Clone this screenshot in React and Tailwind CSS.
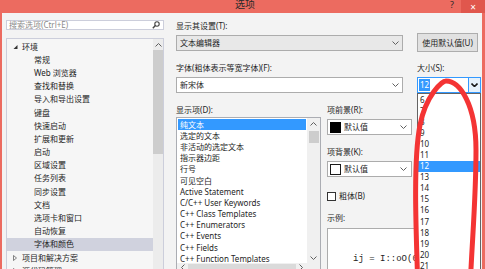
import React from "react";

const treeItems = [
  { label: "环境", top: true, open: true },
  { label: "常规" },
  { label: "Web 浏览器" },
  { label: "查找和替换" },
  { label: "导入和导出设置" },
  { label: "键盘" },
  { label: "快速启动" },
  { label: "扩展和更新" },
  { label: "启动" },
  { label: "区域设置" },
  { label: "任务列表" },
  { label: "同步设置" },
  { label: "文档" },
  { label: "选项卡和窗口" },
  { label: "自动恢复" },
  { label: "字体和颜色", selected: true },
  { label: "项目和解决方案", top: true },
  { label: "源代码管理", top: true },
];

const displayItems = [
  "纯文本",
  "选定的文本",
  "非活动的选定文本",
  "指示器边距",
  "行号",
  "可见空白",
  "Active Statement",
  "C/C++ User Keywords",
  "C++ Class Templates",
  "C++ Enumerators",
  "C++ Events",
  "C++ Fields",
  "C++ Function Templates",
  "C++ Functions",
];

const sizes = [6, 7, 8, 9, 10, 11, 12, 13, 14, 15, 16, 17, 18, 19, 20, 21, 22, 24];

const Chevron = ({ down = true, bold = false }) => (
  <svg width="7" height="4" viewBox="0 0 7 4" className="shrink-0">
    <path
      d={down ? "M0.5 0.5 L3.5 3.5 L6.5 0.5" : "M0.5 3.5 L3.5 0.5 L6.5 3.5"}
      fill="none"
      stroke={bold ? "#1a1a1a" : "#606060"}
      strokeWidth={bold ? 1.6 : 1}
    />
  </svg>
);

const Label = ({ children }) => (
  <div className="h-[10px] leading-[10px] whitespace-nowrap">{children}</div>
);

const ColorCombo = ({ filled }) => (
  <div className="mt-[4px] h-[16px] w-[85px] border border-[#acacac] bg-white flex items-center pl-[2px] pr-[4px]">
    <div
      className={
        filled
          ? "w-[11px] h-[11px] bg-black"
          : "w-[11px] h-[11px] border border-[#1a1a1a] bg-white"
      }
    />
    <span className="ml-[3px] flex-1">默认值</span>
    <Chevron />
  </div>
);

export default function App() {
  return (
    <div className="relative w-[485px] h-[269px] overflow-hidden bg-[#ec6b60] font-['Noto_Sans','Noto_Sans_CJK_SC',sans-serif] text-[8px] text-[#1e1e1e] leading-none">
      {/* title bar */}
      <div className="flex h-[13px] items-start">
        <div className="flex-1" />
        <div className="ml-[5px] text-[10px] leading-[9px] text-[#2a2a2a]">选项</div>
        <div className="flex-1 flex justify-end items-start">
          <span className="w-[10px] text-center text-[9px] leading-[9px] text-[#2a2a2a]">?</span>
          <div className="ml-[4px] w-[24px] h-[13px] bg-[#e0574d] flex items-center justify-center text-white text-[10px]">
            ×
          </div>
        </div>
      </div>

      {/* body */}
      <div className="flex h-[262px] ml-[2px] mr-[3px] bg-[#f3f3f3]">
        {/* left: search + tree */}
        <div className="w-[162px] pl-[4px] pt-[7px] flex flex-col">
          <div className="h-[13px] border border-[#cccedb] bg-white flex items-center pl-[2px] pr-[3px]">
            <span className="flex-1 text-[#8a8a8a] whitespace-nowrap">搜索选项(Ctrl+E)</span>
            <svg width="8" height="8" viewBox="0 0 8 8">
              <circle cx="5" cy="3" r="2.2" fill="none" stroke="#444" strokeWidth="1.1" />
              <path d="M3.4 4.6 L0.8 7.2" stroke="#444" strokeWidth="1.4" />
            </svg>
          </div>
          <div className="mt-[8px] flex-1 border border-[#cccedb] bg-[#f6f6f6] flex">
            <div className="flex-1 pt-[1px]">
              {treeItems.map((item) => (
                <div
                  key={item.label}
                  className={
                    "h-[13.2px] flex items-center whitespace-nowrap " +
                    (item.selected ? "bg-[#d0d2de] " : "") +
                    (item.top ? "pl-[6px]" : "pl-[27px]")
                  }
                >
                  {item.top && (
                    <svg width="9" height="6" viewBox="0 0 9 6" className="shrink-0">
                      {item.open ? (
                        <path d="M4.5 1 L4.5 5 L0.5 5 Z" fill="#333" />
                      ) : (
                        <path d="M0.5 0.5 L3.5 3 L0.5 5.5 Z" fill="none" stroke="#666" strokeWidth="0.8" />
                      )}
                    </svg>
                  )}
                  <span>{item.label}</span>
                </div>
              ))}
            </div>
            <div className="w-[10px] bg-[#ececec] flex flex-col items-center">
              <div className="h-[11px] flex items-center">
                <Chevron down={false} />
              </div>
              <div className="w-[10px] h-[104px] bg-[#cdcdcd]" />
            </div>
          </div>
        </div>

        {/* right panel */}
        <div className="ml-[12px] pt-[8px] flex flex-col">
          <div className="flex items-start">
            <div className="w-[227px]">
              <Label>显示其设置(T):</Label>
              <div className="mt-[4px] h-[16px] border border-[#acacac] bg-[#e8e8e8] flex items-center pl-[3px] pr-[3px]">
                <span className="flex-1">文本编辑器</span>
                <Chevron />
              </div>
            </div>
            <div className="ml-[14px] mt-[12px] w-[61px] h-[19px] border border-[#adadad] bg-[#e1e1e1] flex items-center justify-center whitespace-nowrap">
              使用默认值(U)
            </div>
          </div>

          <div className="mt-[11px] flex items-start">
            <div className="w-[227px]">
              <Label>字体(粗体表示等宽字体)(F):</Label>
              <div className="mt-[4px] h-[16px] border border-[#acacac] bg-white flex items-center pl-[3px] pr-[3px]">
                <span className="flex-1">新宋体</span>
                <Chevron />
              </div>
            </div>
            <div className="ml-[14px] w-[64px]">
              <Label>大小(S):</Label>
              <div className="mt-[4px] h-[16px] border border-[#3399ff] bg-white flex items-center pl-[1px]">
                <span className="bg-[#3399ff] text-white h-[12px] px-[1px] flex items-center">12</span>
                <div className="flex-1" />
                <div className="w-[12px] h-[14px] bg-[#e5f1fb] border-l border-[#3399ff] flex items-center justify-center">
                  <Chevron bold />
                </div>
              </div>
            </div>
          </div>

          <div className="mt-[12px] flex items-start">
            {/* display items list */}
            <div className="w-[145px]">
              <Label>显示项(D):</Label>
              <div className="mt-[2px] h-[160px] border border-[#abadb3] bg-white flex flex-col">
                <div className="h-[145px] flex">
                  <div className="flex-1 pt-[1px] px-[1px] overflow-hidden">
                    {displayItems.map((d, i) => (
                      <div
                        key={d}
                        className={
                          "h-[11.2px] flex items-center pl-[2px] whitespace-nowrap " +
                          (i === 0 ? "bg-[#3399ff] text-white" : "")
                        }
                      >
                        {d}
                      </div>
                    ))}
                  </div>
                  <div className="w-[13px] bg-[#f0f0f0] flex flex-col items-center">
                    <div className="h-[12px] flex items-center">
                      <Chevron down={false} />
                    </div>
                    <div className="mt-[1px] w-[10px] h-[12px] bg-[#cdcdcd]" />
                    <div className="flex-1" />
                    <div className="h-[11px] flex items-center">
                      <Chevron />
                    </div>
                  </div>
                </div>
                <div className="h-[13px] flex bg-[#f0f0f0] items-start">
                  <div className="flex-1 flex items-center h-[8px] px-[4px]">
                    <svg width="4" height="7" viewBox="0 0 4 7">
                      <path d="M3.5 0.5 L0.5 3.5 L3.5 6.5" fill="none" stroke="#606060" />
                    </svg>
                    <div className="flex-1 mx-[3px] h-[7px] bg-[#dadada]" />
                    <svg width="4" height="7" viewBox="0 0 4 7">
                      <path d="M0.5 0.5 L3.5 3.5 L0.5 6.5" fill="none" stroke="#606060" />
                    </svg>
                  </div>
                  <div className="w-[13px]" />
                </div>
              </div>
            </div>

            {/* item colours */}
            <div className="ml-[6px] w-[85px]">
              <Label>项前景(R):</Label>
              <ColorCombo filled />
              <div className="mt-[12px]">
                <Label>项背景(K):</Label>
              </div>
              <ColorCombo />
              <div className="mt-[14px] h-[10px] flex items-center">
                <div className="w-[9px] h-[9px] border border-[#333] bg-white" />
                <span className="ml-[3px]">粗体(B)</span>
              </div>
              <div className="mt-[12px]">
                <Label>示例:</Label>
              </div>
              <div className="mt-[5px] w-[154px] h-[60px] border border-[#acacac] bg-white pt-[26px] pl-[25px] font-['Liberation_Mono',monospace] text-[9px] whitespace-nowrap">
                ij = I::oO(0xB81l);
              </div>
            </div>
          </div>
        </div>
      </div>

      {/* opened size dropdown */}
      <div className="absolute left-[417px] top-[93px] w-[64px] h-[190px] border border-[#646464] bg-white">
        {sizes.map((s) => (
          <div
            key={s}
            className={
              "h-[11.1px] flex items-center pl-[2px] " +
              (s === 12 ? "bg-[#3399ff] text-white" : "")
            }
          >
            {s}
          </div>
        ))}
      </div>

      {/* red annotation ellipse */}
      <svg
        className="absolute inset-0 pointer-events-none"
        width="485"
        height="269"
        viewBox="0 0 485 269"
      >
        <path
          d="M446 81 C460 81 476 105 476 150 C476 200 472 240 470 290 M446 81 C442 81 426 95 420 125 C413 161 416 230 418 290"
          fill="none"
          stroke="#f43434"
          strokeWidth="5"
          strokeLinecap="round"
        />
      </svg>
    </div>
  );
}
